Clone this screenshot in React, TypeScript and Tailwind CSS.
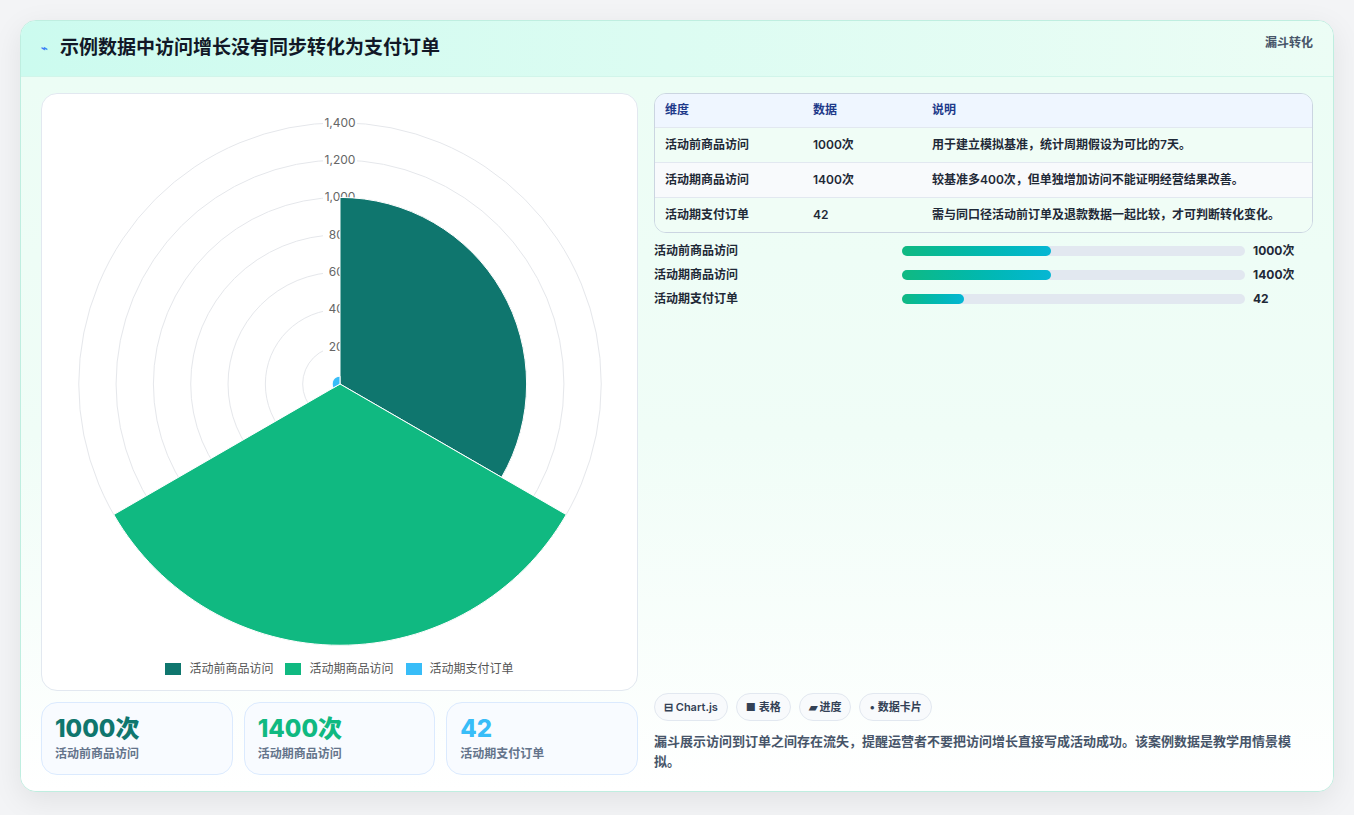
import React from "react";

const rows = [
  { name: "活动前商品访问", val: "1000次", note: "用于建立模拟基准，统计周期假设为可比的7天。", pct: 43.5 },
  { name: "活动期商品访问", val: "1400次", note: "较基准多400次，但单独增加访问不能证明经营结果改善。", pct: 43.5 },
  { name: "活动期支付订单", val: "42", note: "需与同口径活动前订单及退款数据一起比较，才可判断转化变化。", pct: 18 },
];

function arc(cx: number, cy: number, r: number, a0: number, a1: number) {
  const rad = (d: number) => (d * Math.PI) / 180;
  const x0 = cx + r * Math.cos(rad(a0));
  const y0 = cy + r * Math.sin(rad(a0));
  const x1 = cx + r * Math.cos(rad(a1));
  const y1 = cy + r * Math.sin(rad(a1));
  return `M${cx} ${cy} L${x0} ${y0} A${r} ${r} 0 0 1 ${x1} ${y1} Z`;
}

function PolarChart() {
  const cx = 298, cy = 282, k = 0.1866;
  const ticks = [200, 400, 600, 800, 1000, 1200, 1400];
  return (
    <svg width="596" height="560" className="block">
      {ticks.map((t) => (
        <circle key={t} cx={cx} cy={cy} r={t * k} fill="none" stroke="#e5e7eb" strokeWidth="1" />
      ))}
      {ticks.map((t) => (
        <g key={"l" + t}>
          <rect x={cx - 17} y={cy - t * k - 7} width="34" height="14" fill="white" />
          <text x={cx} y={cy - t * k + 4} textAnchor="middle" fontSize="12" fill="#666">
            {t.toLocaleString("en-US")}
          </text>
        </g>
      ))}
      <path d={arc(cx, cy, 1000 * k, -90, 30)} fill="#0f766e" stroke="white" strokeWidth="1" />
      <path d={arc(cx, cy, 1400 * k, 30, 150)} fill="#10b981" stroke="white" strokeWidth="1" />
      <path d={arc(cx, cy, 42 * k, 150, 270)} fill="#38bdf8" stroke="white" strokeWidth="1" />
    </svg>
  );
}

export default function App() {
  return (
    <div className="min-h-[815px] bg-[#f3f4f6] p-5" style={{ fontFamily: "Inter, 'Noto Sans CJK SC', sans-serif" }}>
      <div className="overflow-hidden rounded-2xl border border-[#bfeee0] bg-white shadow-[0_8px_30px_rgba(0,0,0,0.08)]">
        <div className="flex h-[56px] items-center justify-between border-b border-[#d1f5ea] bg-gradient-to-r from-[#ccfbef] to-[#ecfdf5] px-5">
          <h1 className="flex items-center gap-3 text-[19px] font-bold text-[#111827]">
            <span className="text-[11px] text-[#3b82f6]">⌁</span>
            示例数据中访问增长没有同步转化为支付订单
          </h1>
          <span className="-mt-3 text-[12px] font-bold text-[#475569]">漏斗转化</span>
        </div>
        <div className="flex gap-4 bg-gradient-to-b from-[#ecfdf5] via-[#f0fdf7] to-white px-5 pt-4 pb-4">
          <div className="flex w-[597px] flex-col gap-[11px]">
            <div className="flex h-[598px] flex-col items-center rounded-2xl border border-[#e2e8f0] bg-white">
              <div className="mt-2"><PolarChart /></div>
              <div className="mt-[-2px] flex items-center gap-3 text-[12px] text-[#555]">
                <span className="flex items-center gap-2"><span className="h-3 w-4 bg-[#0f766e]" />活动前商品访问</span>
                <span className="flex items-center gap-2"><span className="h-3 w-4 bg-[#10b981]" />活动期商品访问</span>
                <span className="flex items-center gap-2"><span className="h-3 w-4 bg-[#38bdf8]" />活动期支付订单</span>
              </div>
            </div>
            <div className="grid grid-cols-3 gap-[11px]">
              {[
                ["1000次", "活动前商品访问", "text-[#0f766e]"],
                ["1400次", "活动期商品访问", "text-[#10b981]"],
                ["42", "活动期支付订单", "text-[#38bdf8]"],
              ].map(([v, l, c]) => (
                <div key={l} className="h-[73px] rounded-2xl border border-[#dbeafe] bg-[#f8fbff] px-[13px] pt-[10px]">
                  <div className={`text-[24px] font-extrabold leading-[32px] ${c}`}>{v}</div>
                  <div className="text-[12px] font-semibold text-[#64748b]">{l}</div>
                </div>
              ))}
            </div>
          </div>
          <div className="flex flex-1 flex-col">
            <div className="overflow-hidden rounded-xl border border-[#cbd5e1]">
              <table className="w-full text-left text-[12px] font-semibold">
                <thead>
                  <tr className="h-[33px] bg-[#eff6ff] text-[#1e3a8a]">
                    <th className="w-[158px] pl-[10px] font-semibold">维度</th>
                    <th className="w-[119px] font-semibold">数据</th>
                    <th className="font-semibold">说明</th>
                  </tr>
                </thead>
                <tbody className="text-[#1f2937]">
                  {rows.map((r, i) => (
                    <tr key={r.name} className={`h-[35px] border-t border-[#e2e8f0] ${i === 1 ? "bg-[#f8fafc]" : "bg-[#f0fdf6]"}`}>
                      <td className="pl-[10px]">{r.name}</td>
                      <td>{r.val}</td>
                      <td>{r.note}</td>
                    </tr>
                  ))}
                </tbody>
              </table>
            </div>
            <div className="mt-[9px] flex flex-col gap-[6px]">
              {rows.map((r) => (
                <div key={r.name} className="flex h-[18px] items-center text-[12px] font-semibold text-[#1f2937]">
                  <span className="w-[248px]">{r.name}</span>
                  <div className="h-[10px] w-[343px] rounded-full bg-[#e2e8f0]">
                    <div className="h-full rounded-full bg-gradient-to-r from-[#10b981] to-[#06b6d4]" style={{ width: `${r.pct}%` }} />
                  </div>
                  <span className="ml-2 font-bold">{r.val}</span>
                </div>
              ))}
            </div>
            <div className="flex-1" />
            <div className="flex gap-2 text-[11px] font-semibold text-[#334155]">
              {["⊟ Chart.js", "■ 表格", "▰ 进度", "• 数据卡片"].map((t) => (
                <span key={t} className="rounded-full border border-[#e2e8f0] bg-[#f8fafc] px-[9px] py-[5px]">{t}</span>
              ))}
            </div>
            <p className="mt-[10px] mb-1 text-[13px] font-semibold leading-[20px] text-[#475569]">
              漏斗展示访问到订单之间存在流失，提醒运营者不要把访问增长直接写成活动成功。该案例数据是教学用情景模拟。
            </p>
          </div>
        </div>
      </div>
    </div>
  );
}
